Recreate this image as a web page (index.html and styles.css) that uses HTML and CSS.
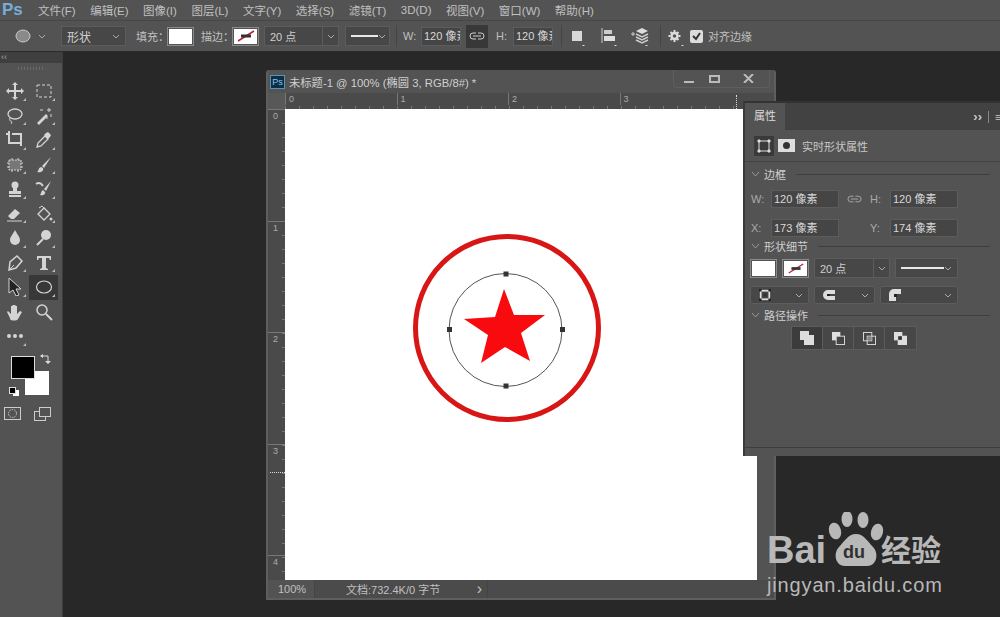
FILE: index.html
```html
<!DOCTYPE html>
<html lang="zh-CN">

<head>
    <meta charset="UTF-8">
    <title>Photoshop</title>
    <link rel="stylesheet" href="styles.css">
</head>

<body>
    <!-- menu -->
    <div class="menubar">
        <span class="ps-logo">Ps</span>
        <span>文件(F)</span>
        <span>编辑(E)</span>
        <span>图像(I)</span>
        <span>图层(L)</span>
        <span>文字(Y)</span>
        <span>选择(S)</span>
        <span>滤镜(T)</span>
        <span>3D(D)</span>
        <span>视图(V)</span>
        <span>窗口(W)</span>
        <span>帮助(H)</span>
    </div>

    <!-- options -->
    <div class="optionsbar">
        <svg class="opt-ellipse" width="16" height="14" viewBox="0 0 16 14"><ellipse cx="8" cy="7" rx="7" ry="6" fill="#8a8a8a" stroke="#c8c8c8"/></svg>
        <svg class="chev opt-chev" width="8" height="5" viewBox="0 0 8 5"><path d="M1 1l3 3 3-3" fill="none" stroke="#aaa"/></svg>
        <div class="select opt-shape"><span>形状</span><svg class="chev" width="8" height="5" viewBox="0 0 8 5"><path d="M1 1l3 3 3-3" fill="none" stroke="#aaa"/></svg></div>
        <span class="opt-label opt-fill">填充：</span>
        <div class="swatch opt-swatch"></div>
        <span class="opt-label opt-stroke">描边：</span>
        <div class="swatch swatch-stroke opt-swatch"><svg width="22" height="14" viewBox="0 0 22 14"><path d="M3 12L19 2" stroke="#c0222c" stroke-width="1.5"/><rect x="6" y="5.500" width="10" height="3" fill="#333"/></svg></div>
        <div class="select opt-size"><span>20 点</span><i class="select-split"></i><svg class="chev" width="8" height="5" viewBox="0 0 8 5"><path d="M1 1l3 3 3-3" fill="none" stroke="#aaa"/></svg></div>
        <div class="select opt-line"><i class="line-sample"></i><svg class="chev" width="8" height="5" viewBox="0 0 8 5"><path d="M1 1l3 3 3-3" fill="none" stroke="#aaa"/></svg></div>
        <i class="opt-sep"></i>
        <span class="opt-label opt-w">W:</span>
        <div class="field opt-field">120 像素</div>
        <div class="opt-link"><svg width="16" height="8" viewBox="0 0 16 8"><path d="M7 1H4a3 3 0 000 6h3M9 1h3a3 3 0 010 6H9M4 4h8" fill="none" stroke="#ccc"/></svg></div>
        <span class="opt-label opt-h">H:</span>
        <div class="field opt-field">120 像素</div>
        <i class="opt-sep opt-sep2"></i>
        <svg class="opt-icon-square" width="17" height="20" viewBox="0 0 17 20"><rect x="1" y="5" width="10" height="10" fill="#d8d8d8"/><path d="M11 19h3l-1.500 1.500z" fill="#ddd"/></svg>
        <svg class="opt-icon-align" width="17" height="20" viewBox="0 0 17 20"><path d="M1 2v15" stroke="#ccc"/><rect x="3" y="4" width="8" height="4" fill="#ccc"/><rect x="3" y="10" width="11" height="5" fill="#ddd"/><path d="M13 19h3l-1.500 1.500z" fill="#ddd"/></svg>
        <svg class="opt-icon-layers" width="20" height="20" viewBox="0 0 20 20"><path d="M1 8h4M3 6v4" stroke="#ccc"/><path d="M12 2l6 3-6 3-6-3z" fill="#ddd"/><path d="M6 8l6 3 6-3M6 11l6 3 6-3M6 14l6 3 6-3" fill="none" stroke="#ccc" stroke-width="1.500"/><path d="M15 19h3l-1.500 1.500z" fill="#ddd"/></svg>
        <i class="opt-sep opt-sep3"></i>
        <svg class="opt-icon-gear" width="18" height="20" viewBox="0 0 18 20"><circle cx="6.500" cy="10" r="3" fill="none" stroke="#ddd" stroke-width="2.500"/><path d="M6.500 4v2M6.500 14v2M.500 10h2M10.500 10h2M2.500 6l1.500 1.500M9 12.500l1.500 1.500M10.500 6L9 7.500M4 12.500L2.500 14" stroke="#ddd" stroke-width="2"/><path d="M13 19h3l-1.500 1.500z" fill="#ddd"/></svg>
        <div class="checkbox"><svg width="11" height="11" viewBox="0 0 11 11"><path d="M2 5l3 3 4-6" fill="none" stroke="#333" stroke-width="2"/></svg></div>
        <span class="opt-label opt-snap">对齐边缘</span>
    </div>

    <div class="workspace">
        <!-- tools -->
        <aside class="tools">
            <div class="tools-head">‹‹</div>
            <div class="grip"></div>
            <div class="tool-grid">
                <div class="tool more"><svg viewBox="0 0 18 18"><path d="M9 1v16M1 9h16" stroke="#d4d4d4" stroke-width="2"/><path d="M9 0l3 3H6zM9 18l3-3H6zM0 9l3-3v6zM18 9l-3-3v6z" fill="#d4d4d4"/></svg></div>
                <div class="tool more"><svg viewBox="0 0 18 18"><rect x="2" y="3" width="14" height="12" fill="none" stroke="#d4d4d4" stroke-dasharray="3 2"/></svg></div>
                <div class="tool more"><svg viewBox="0 0 18 18"><ellipse cx="9" cy="7" rx="7" ry="5" fill="none" stroke="#d4d4d4" stroke-width="1.300"/><path d="M4 11c-1 2 0 3 1 3s1 2 0 3" fill="none" stroke="#d4d4d4"/></svg></div>
                <div class="tool more"><svg viewBox="0 0 18 18"><path d="M2 16l9-9 2 2-9 9z" fill="#d4d4d4"/><path d="M14 1v4M12 3h4M16 7v3M5 3h3M12 10v2" stroke="#d4d4d4"/></svg></div>
                <div class="tool more"><svg viewBox="0 0 18 18"><path d="M0 3h3M3 0v12h12M6 3h9v12" fill="none" stroke="#d4d4d4" stroke-width="2"/></svg></div>
                <div class="tool more"><svg viewBox="0 0 18 18"><path d="M2 16l1-4 7-7 3 3-7 7z" fill="none" stroke="#d4d4d4" stroke-width="1.300"/><path d="M9 4l2-2 2-1 3 3-1 2-2 2z" fill="#d4d4d4"/></svg></div>
                <div class="tool more"><svg viewBox="0 0 18 18"><rect x="3" y="4" width="12" height="10" fill="#777" stroke="#d4d4d4" stroke-dasharray="2 1"/><path d="M1 7h2M1 11h2M15 7h2M15 11h2M6 2v2M12 2v2M6 14v2M12 14v2" stroke="#d4d4d4"/></svg></div>
                <div class="tool more"><svg viewBox="0 0 18 18"><path d="M16 1L7 10l2 2z" fill="#d4d4d4"/><path d="M6 11c-3 1-2 4-4 5 4 1 7-1 6-4z" fill="#d4d4d4"/></svg></div>
                <div class="tool more"><svg viewBox="0 0 18 18"><circle cx="9" cy="5" r="3.500" fill="#d4d4d4"/><path d="M7 8h4v3H7zM3 11h12v3H3zM3 15h12v2H3z" fill="#d4d4d4"/></svg></div>
                <div class="tool more"><svg viewBox="0 0 18 18"><path d="M16 1L9 9l2 2z" fill="#d4d4d4"/><path d="M8 10c-2 1-2 4-3 5 3 1 6-1 5-3z" fill="#d4d4d4"/><path d="M1 4c3-2 5-1 7 2" fill="none" stroke="#d4d4d4" stroke-width="2"/></svg></div>
                <div class="tool more"><svg viewBox="0 0 18 18"><path d="M2 11l7-7 5 4-6 6H5z" fill="#d4d4d4"/><path d="M1 16h15" stroke="#d4d4d4"/></svg></div>
                <div class="tool more"><svg viewBox="0 0 18 18"><path d="M9 3l6 6-6 6-6-6z" fill="none" stroke="#d4d4d4" stroke-width="1.300"/><path d="M4 3l3-2 3 3" fill="none" stroke="#d4d4d4"/><circle cx="16" cy="14" r="1.500" fill="#d4d4d4"/></svg></div>
                <div class="tool more"><svg viewBox="0 0 18 18"><path d="M9 1c2 4 5 7 5 10a5 5 0 01-10 0c0-3 3-6 5-10z" fill="#d4d4d4"/></svg></div>
                <div class="tool more"><svg viewBox="0 0 18 18"><circle cx="11" cy="6" r="5" fill="#d4d4d4"/><path d="M8 10l-6 6" stroke="#d4d4d4" stroke-width="2"/></svg></div>
                <div class="tool more"><svg viewBox="0 0 18 18"><path d="M3 16l1-8 7-6 5 5-6 7z" fill="none" stroke="#d4d4d4" stroke-width="1.500"/><path d="M3 16l5-5" stroke="#d4d4d4"/></svg></div>
                <div class="tool more"><svg viewBox="0 0 18 18"><path d="M2 2h14v4h-1l-1-2h-3v10l2 1v1H5v-1l2-1V4H4L3 6H2z" fill="#d4d4d4"/></svg></div>
                <div class="tool more"><svg viewBox="0 0 18 18"><path d="M3 0v15l4-3 3 6 3-1-3-6h5z" fill="#222" stroke="#d4d4d4"/></svg></div>
                <div class="tool more tool-active"><svg viewBox="0 0 18 18"><ellipse cx="9" cy="9" rx="7.500" ry="6" fill="none" stroke="#d4d4d4" stroke-width="1.200"/></svg></div>
                <div class="tool"><svg viewBox="0 0 18 18"><path d="M4 15L1 9l1-1 3 3V3h1.500v6-7H8v7-7h1.500v7-6H11v8l3-3 2 1-4 7c-1 2-7 2-8 0z" fill="#d4d4d4"/></svg></div>
                <div class="tool"><svg viewBox="0 0 18 18"><circle cx="7" cy="7" r="5" fill="none" stroke="#d4d4d4" stroke-width="1.500"/><path d="M11 11l6 6" stroke="#d4d4d4" stroke-width="2"/></svg></div>
                <div class="tool more"><svg viewBox="0 0 18 18"><circle cx="3" cy="9" r="2" fill="#d4d4d4"/><circle cx="9" cy="9" r="2" fill="#d4d4d4"/><circle cx="15" cy="9" r="2" fill="#d4d4d4"/></svg></div>
            </div>
            <div class="colors">
                <svg class="colors-swap" width="11" height="11" viewBox="0 0 11 11"><path d="M1 2h7v6" fill="none" stroke="#ddd"/><path d="M0 2l3-2v4zM8 10L5 7h6z" fill="#ddd"/></svg>
                <i class="color-bg"></i>
                <i class="color-fg"></i>
                <i class="colors-default-bg"></i>
                <i class="colors-default"></i>
            </div>
            <div class="tool-bottom">
                <svg width="17" height="13" viewBox="0 0 17 13"><rect x=".5" y=".5" width="16" height="12" fill="none" stroke="#ccc"/><circle cx="8.500" cy="6.500" r="4" fill="none" stroke="#ccc" stroke-dasharray="1.500 1"/></svg>
                <svg width="18" height="14" viewBox="0 0 18 14"><rect x=".5" y="4.500" width="11" height="9" fill="#535353" stroke="#ccc"/><rect x="5.500" y=".5" width="11" height="9" fill="#535353" stroke="#ccc"/></svg>
            </div>
        </aside>

        <!-- document window -->
        <section class="doc-window">
            <div class="doc-title">
                <span class="doc-icon">Ps</span>
                <span class="doc-name">未标题-1 @ 100% (椭圆 3, RGB/8#) *</span>
                <div class="win-buttons">
                    <i class="win-min"></i>
                    <i class="win-max"></i>
                    <svg class="win-close" width="11" height="9" viewBox="0 0 11 9"><path d="M1 0l9 9M10 0L1 9" stroke="#bbb" stroke-width="2"/></svg>
                </div>
            </div>
            <div class="ruler-h">
                <div class="ruler-corner"></div>
                <div class="ruler-h-scale"><span>0</span><span>1</span><span>2</span><span>3</span></div>
                <i class="ruler-mark-h"></i>
            </div>
            <div class="doc-main">
                <div class="ruler-v"><span>0</span><span>1</span><span>2</span><span>3</span><span>4</span><i class="ruler-mark-v"></i></div>
                <div class="canvas">
                    <svg class="art" width="472" height="471" viewBox="285 109 472 471">
                        <circle cx="507" cy="328" r="91.500" fill="none" stroke="#d81616" stroke-width="5"/>
                        <circle cx="505.500" cy="330" r="56.500" fill="none" stroke="#555" stroke-width="1"/>
                        <polygon points="504,289 514,315 545,315 521,333 530,361 505,347 481,363 488,335 464,319 495,317" fill="#f80a0e"/>
                        <rect x="503.500" y="271.500" width="5" height="5" fill="#333"/>
                        <rect x="503.500" y="383.500" width="5" height="5" fill="#333"/>
                        <rect x="447" y="327" width="5" height="5" fill="#333"/>
                        <rect x="560" y="327" width="5" height="5" fill="#333"/>
                    </svg>
                </div>
                <div class="doc-scroll"></div>
            </div>
            <div class="doc-status">
                <span class="status-zoom">100%</span>
                <div class="status-mid">
                    <span>文档:732.4K/0 字节</span>
                    <span class="status-arrow">›</span>
                </div>
            </div>
        </section>

        <!-- properties panel -->
        <section class="props">
            <div class="props-tabs">
                <span class="props-tab">属性</span>
                <span class="props-collapse">››</span>
                <i class="props-tabsep"></i>
                <span class="props-menu">≡</span>
            </div>
            <div class="props-kind">
                <span class="kind-btn"><svg width="14" height="14" viewBox="0 0 14 14"><rect x="2" y="2" width="10" height="10" fill="none" stroke="#ddd"/><path d="M1 1h2v2H1zM11 1h2v2h-2zM1 11h2v2H1zM11 11h2v2h-2z" fill="#ddd" stroke="#ddd"/></svg></span>
                <span class="kind-mask"><i></i></span>
                <span class="kind-label">实时形状属性</span>
            </div>
            <div class="section-head">
                <svg width="9" height="6" viewBox="0 0 9 6"><path d="M1 1l3.500 4L8 1" fill="none" stroke="#999"/></svg>
                <span>边框</span><i></i>
            </div>
            <div class="dim-row">
                <span class="dim-label">W:</span><div class="field dim-field">120 像素</div>
                <svg class="dim-link" width="15" height="8" viewBox="0 0 16 8"><path d="M7 1H4a3 3 0 000 6h3M9 1h3a3 3 0 010 6H9M4 4h8" fill="none" stroke="#aaa"/></svg>
                <span class="dim-label dim-label-h">H:</span><div class="field dim-field">120 像素</div>
            </div>
            <div class="dim-row dim-row-xy">
                <span class="dim-label">X:</span><div class="field dim-field">173 像素</div>
                <i class="dim-link-gap"></i>
                <span class="dim-label dim-label-h">Y:</span><div class="field dim-field">174 像素</div>
            </div>
            <div class="section-head section-tight">
                <svg width="9" height="6" viewBox="0 0 9 6"><path d="M1 1l3.500 4L8 1" fill="none" stroke="#999"/></svg>
                <span>形状细节</span><i></i>
            </div>
            <div class="shape-row">
                <div class="swatch prop-swatch"></div>
                <div class="swatch swatch-stroke prop-swatch"><svg width="20" height="13" viewBox="0 0 22 14"><path d="M3 12L19 2" stroke="#c0222c" stroke-width="1.500"/><rect x="6" y="5.500" width="10" height="3" fill="#333"/></svg></div>
                <div class="select prop-size"><span>20 点</span><i class="select-split"></i><svg class="chev" width="8" height="5" viewBox="0 0 8 5"><path d="M1 1l3 3 3-3" fill="none" stroke="#aaa"/></svg></div>
                <div class="select prop-line"><i class="line-sample"></i><svg class="chev" width="8" height="5" viewBox="0 0 8 5"><path d="M1 1l3 3 3-3" fill="none" stroke="#aaa"/></svg></div>
            </div>
            <div class="shape-row shape-row2">
                <div class="select prop-drop prop-drop1"><svg width="12" height="12" viewBox="0 0 14 14"><rect x="2" y="2" width="10" height="10" fill="none" stroke="#e0e0e0" stroke-width="2"/><rect x="5" y="5" width="4" height="4" fill="#333"/><path d="M0 0h3v3H0zM11 0h3v3h-3zM0 11h3v3H0zM11 11h3v3h-3z" fill="#222"/></svg><svg class="chev" width="8" height="5" viewBox="0 0 8 5"><path d="M1 1l3 3 3-3" fill="none" stroke="#aaa"/></svg></div>
                <div class="select prop-drop prop-drop2"><svg width="12" height="10" viewBox="0 0 12 10"><path d="M12 0H5a5 5 0 000 10h7V6H5V4h7z" fill="#ddd"/><rect x="4" y="4" width="3" height="2" fill="#222"/></svg><svg class="chev" width="8" height="5" viewBox="0 0 8 5"><path d="M1 1l3 3 3-3" fill="none" stroke="#aaa"/></svg></div>
                <div class="select prop-drop prop-drop3"><svg width="12" height="12" viewBox="0 0 12 12"><path d="M0 12V5a5 5 0 015-5h7v5H7v7H0z" fill="#ddd"/><rect x="5" y="5" width="3" height="3" fill="#222"/></svg><svg class="chev" width="8" height="5" viewBox="0 0 8 5"><path d="M1 1l3 3 3-3" fill="none" stroke="#aaa"/></svg></div>
            </div>
            <div class="section-head section-path">
                <svg width="9" height="6" viewBox="0 0 9 6"><path d="M1 1l3.500 4L8 1" fill="none" stroke="#999"/></svg>
                <span>路径操作</span><i></i>
            </div>
            <div class="path-ops">
                <span class="path-op path-op-on"><svg width="14" height="14" viewBox="0 0 14 14"><path d="M0 0h9v4h5v10H4V9H0z" fill="#ddd"/></svg></span>
                <span class="path-op"><svg width="13" height="13" viewBox="0 0 14 14"><rect x="0" y="0" width="9" height="9" fill="#ddd"/><rect x="4.500" y="4.500" width="9" height="9" fill="#444" stroke="#ddd"/></svg></span>
                <span class="path-op"><svg width="13" height="13" viewBox="0 0 14 14"><rect x=".5" y=".5" width="9" height="9" fill="none" stroke="#ddd"/><rect x="4.500" y="4.500" width="9" height="9" fill="none" stroke="#ddd"/><rect x="5" y="5" width="4" height="4" fill="#888"/></svg></span>
                <span class="path-op"><svg width="13" height="13" viewBox="0 0 14 14"><rect x="0" y="0" width="9" height="9" fill="#ddd"/><rect x="4" y="4" width="10" height="10" fill="#ddd"/><rect x="4.500" y="4.500" width="4" height="4" fill="#333"/></svg></span>
            </div>
            <div class="props-foot"></div>
        </section>

        <!-- watermark -->
        <div class="watermark">
            <svg class="paw" width="60" height="62" viewBox="0 0 60 62">
                <ellipse cx="9" cy="19" rx="6" ry="8.500" fill="#b8b8b8" transform="rotate(-15 9 19)"/>
                <ellipse cx="21" cy="7" rx="5.500" ry="8" fill="#b8b8b8"/>
                <ellipse cx="37" cy="8" rx="5.500" ry="8" fill="#b8b8b8"/>
                <ellipse cx="51" cy="20" rx="6" ry="8.500" fill="#b8b8b8" transform="rotate(15 51 20)"/>
                <path d="M30 22c8 0 12 8 17 13 6 6 4 19-6 19H19C9 54 7 41 13 35c5-5 9-13 17-13z" fill="#b8b8b8"/>
            </svg>
            <span class="paw-du">du</span>
            <span class="wm-bai">Bai</span>
            <span class="wm-jy">经验</span>
            <span class="wm-url">jingyan.baidu.com</span>
        </div>
    </div>
</body>

</html>
```

FILE: styles.css
```css
* {
    box-sizing: border-box;
}

html,
body {
    margin: 0;
    height: 100%;
}

body {
    width: 1000px;
    height: 617px;
    overflow: hidden;
    display: flex;
    flex-direction: column;
    background-color: #282828;
    color: #c8c8c8;
    font-family: "Liberation Sans", "Noto Sans CJK SC", sans-serif;
    font-size: 11px;
}

i {
    display: block;
}

/* menu */
.menubar {
    height: 20px;
    display: flex;
    align-items: center;
    padding-left: 2px;
    background-color: #535353;
    color: #c0c0c0;
    font-size: 11.500px;
}

.menubar span {
    margin-right: 14.500px;
    white-space: nowrap;
}

.menubar .ps-logo {
    width: 21px;
    margin-right: 15px;
    color: #78aed6;
    font-size: 17px;
    font-weight: bold;
}

/* options bar */
.optionsbar {
    height: 32px;
    display: flex;
    align-items: center;
    background-color: #535353;
    border-top: 1px solid #464646;
    border-bottom: 1px solid #2b2b2b;
    padding-left: 15px;
    color: #c0c0c0;
}

.chev {
    flex: none;
}

.opt-chev {
    margin-left: 7px;
}

.select {
    height: 20px;
    display: flex;
    align-items: center;
    justify-content: space-between;
    padding: 0 5px;
    background-color: #474747;
    border: 1px solid #5c5c5c;
    color: #d0d0d0;
}

.select-split {
    width: 1px;
    height: 18px;
    background-color: #5c5c5c;
    margin-left: auto;
    margin-right: 4px;
}

.opt-shape {
    width: 65px;
    margin-left: 15px;
    font-size: 12px;
}

.opt-label {
    white-space: nowrap;
}

.opt-fill {
    margin-left: 10px;
    width: 31px;
}

.opt-stroke {
    margin-left: 7px;
    width: 31px;
}

.swatch {
    background-color: #fff;
    border: 2px solid #535353;
    outline: 1px solid #8a8a8a;
    outline-offset: -1px;
}

.swatch-stroke {
    display: flex;
    align-items: center;
    justify-content: center;
}

.opt-swatch {
    width: 27px;
    height: 19px;
}

.opt-size {
    width: 75px;
    margin-left: 5px;
    padding-right: 3px;
}

.opt-line {
    width: 45px;
    margin-left: 6px;
    padding-right: 3px;
}

.line-sample {
    width: 28px;
    height: 2px;
    background-color: #e8e8e8;
}

.opt-sep {
    width: 1px;
    height: 22px;
    background-color: #444;
    margin-left: 6px;
}

.opt-w {
    margin-left: 6px;
    width: 18px;
}

.opt-h {
    margin-left: 8px;
    width: 17px;
}

.field {
    background-color: #454545;
    border: 1px solid #5c5c5c;
    color: #d8d8d8;
    white-space: nowrap;
    overflow: hidden;
    padding-left: 2px;
}

.opt-field {
    width: 40px;
    height: 19px;
    line-height: 17px;
}

.opt-link {
    width: 22px;
    height: 23px;
    margin-left: 5px;
    display: flex;
    align-items: center;
    justify-content: center;
    background-color: #383838;
}

.opt-sep2 {
    margin-left: 8px;
}

.opt-icon-square {
    margin-left: 9px;
}

.opt-icon-align {
    margin-left: 13px;
}

.opt-icon-layers {
    margin-left: 12px;
}

.opt-sep3 {
    margin-left: 10px;
}

.opt-icon-gear {
    margin-left: 7px;
}

.checkbox {
    width: 13px;
    height: 13px;
    margin-left: 4px;
    background-color: #dcdcdc;
    border-radius: 2px;
    display: flex;
    align-items: center;
    justify-content: center;
}

.opt-snap {
    margin-left: 5px;
}

/* workspace */
.workspace {
    position: relative;
    flex: 1;
}

.tools {
    width: 63px;
    height: 100%;
    background-color: #535353;
    border-right: 1px solid #3c3c3c;
}

.tools-head {
    height: 11px;
    line-height: 10px;
    padding-left: 1px;
    background-color: #3f3f3f;
    color: #aaa;
    font-size: 9px;
}

.grip {
    height: 3px;
    margin: 4px 18px 0;
    background-image: repeating-linear-gradient(90deg, #6a6a6a 0 1px, transparent 1px 3px);
}

.tool-grid {
    display: grid;
    grid-template-columns: 29px 29px;
    grid-auto-rows: 24.500px;
    margin-top: 9px;
}

.tool {
    position: relative;
    display: flex;
    align-items: center;
    justify-content: center;
}

.tool svg {
    width: 18px;
    height: 18px;
}

.tool.more::after {
    content: "";
    position: absolute;
    right: 3px;
    bottom: 3px;
    border-style: solid;
    border-width: 0 0 3px 3px;
    border-color: transparent transparent #bbb transparent;
}

.tool-active {
    background-color: #383838;
}

.colors {
    position: relative;
    height: 46px;
    margin-top: 4px;
}

.color-fg {
    position: absolute;
    left: 11px;
    top: 3px;
    width: 24px;
    height: 23px;
    background-color: #000;
    border: 1px solid #ddd;
}

.color-bg {
    position: absolute;
    left: 25px;
    top: 18px;
    width: 24px;
    height: 24px;
    background-color: #fff;
}

.colors-swap {
    position: absolute;
    left: 40px;
    top: 1px;
}

.colors-default {
    position: absolute;
    left: 9px;
    top: 34px;
    width: 7px;
    height: 7px;
    background-color: #000;
    border: 1px solid #ddd;
}

.colors-default-bg {
    position: absolute;
    left: 13px;
    top: 37px;
    width: 6px;
    height: 6px;
    background-color: #fff;
}

.tool-bottom {
    display: flex;
    justify-content: space-between;
    padding: 0 10px 0 4px;
    margin-top: 8px;
}

/* document window */
.doc-window {
    position: absolute;
    left: 266px;
    top: 18px;
    width: 510px;
    height: 530px;
    display: flex;
    flex-direction: column;
    background-color: #535353;
    border: 2px solid #5e5e5e;
    border-top-width: 0;
    border-radius: 3px 3px 0 0;
}

.doc-title {
    position: relative;
    height: 23px;
    display: flex;
    align-items: center;
    padding-left: 2px;
    font-size: 11.300px;
}

.doc-icon {
    width: 15px;
    height: 14px;
    line-height: 12px;
    background-color: #0c2f48;
    border: 1px solid #5a93b8;
    color: #8ec5ea;
    font-size: 9px;
    text-align: center;
}

.doc-name {
    margin-left: 4px;
    color: #cfcfcf;
}

.win-buttons {
    position: absolute;
    right: 4px;
    top: 0;
    width: 97px;
    height: 18px;
    display: flex;
    align-items: center;
    border: 1px solid #5e5e5e;
    border-top: 0;
    border-radius: 0 0 4px 4px;
}

.win-min {
    width: 10px;
    height: 2px;
    margin: 6px 0 0 10px;
    background-color: #bbb;
}

.win-max {
    width: 11px;
    height: 8px;
    margin-left: 15px;
    border: 2px solid #bbb;
}

.win-close {
    margin-left: 23px;
}

.ruler-h {
    position: relative;
    height: 16px;
    display: flex;
    background-color: #4a4a4a;
}

.ruler-corner {
    width: 17px;
    background-color: #585858;
}

.ruler-h-scale {
    flex: 1;
    display: flex;
    background-image: repeating-linear-gradient(90deg, #777 0 1px, transparent 1px 14px);
    background-size: 100% 3px;
    background-position: bottom;
    background-repeat: no-repeat;
}

.ruler-h-scale span {
    width: 111.500px;
    height: 12px;
    padding-left: 3px;
    line-height: 12px;
    font-size: 9px;
    color: #aaa;
    border-left: 1px solid #777;
}

.ruler-mark-h {
    position: absolute;
    left: 468px;
    top: 2px;
    height: 14px;
    border-left: 1px dotted #ddd;
}

.doc-main {
    flex: 1;
    display: flex;
    min-height: 0;
}

.ruler-v {
    position: relative;
    width: 17px;
    flex: none;
    overflow: hidden;
    display: flex;
    flex-direction: column;
    background-color: #4a4a4a;
    background-image: repeating-linear-gradient(180deg, #777 0 1px, transparent 1px 14px);
    background-size: 3px 100%;
    background-position: right;
    background-repeat: no-repeat;
}

.ruler-v span {
    flex: none;
    height: 111.500px;
    padding: 1px 0 0 5px;
    font-size: 9px;
    color: #aaa;
    border-top: 1px solid #777;
}

.ruler-mark-v {
    position: absolute;
    left: 2px;
    right: 0;
    top: 363px;
    border-top: 1px dotted #ddd;
}

.canvas {
    width: 472px;
    flex: none;
    background-color: #fff;
}

.art {
    display: block;
}

.doc-scroll {
    flex: 1;
    background-color: #535353;
}

.doc-status {
    height: 18px;
    display: flex;
    align-items: center;
    background-color: #4b4b4b;
    color: #c0c0c0;
    font-size: 11px;
}

.status-zoom {
    width: 47px;
    height: 100%;
    line-height: 18px;
    padding-left: 10px;
    background-color: #535353;
    border-right: 1px solid #444;
}

.status-mid {
    width: 173px;
    height: 100%;
    display: flex;
    align-items: center;
    justify-content: space-between;
    padding: 0 5px 0 31px;
    border-right: 1px solid #444;
}

.status-arrow {
    font-size: 16px;
}

/* properties panel */
.props {
    position: absolute;
    left: 743px;
    top: 49px;
    width: 257px;
    height: 355px;
    display: flex;
    flex-direction: column;
    background-color: #535353;
    border-left: 2px solid #3a3a3a;
    border-top: 2px solid #333;
    color: #c8c8c8;
}

.props-tabs {
    height: 27px;
    flex: none;
    display: flex;
    align-items: center;
    background-color: #424242;
    position: relative;
}

.props-tab {
    width: 40px;
    height: 100%;
    line-height: 27px;
    padding-left: 9px;
    background-color: #535353;
    color: #ddd;
}

.props-collapse {
    margin-left: auto;
    font-size: 13px;
    font-weight: bold;
}

.props-tabsep {
    width: 1px;
    height: 12px;
    background-color: #888;
    margin: 0 6px;
}

.props-menu {
    width: 5px;
    overflow: hidden;
}

.props-kind {
    height: 32px;
    flex: none;
    display: flex;
    align-items: center;
    padding-left: 9px;
    border-bottom: 1px solid #444;
}

.kind-btn {
    width: 20px;
    height: 20px;
    display: flex;
    align-items: center;
    justify-content: center;
    background-color: #3a3a3a;
}

.kind-mask {
    width: 17px;
    height: 13px;
    margin-left: 4px;
    display: flex;
    align-items: center;
    justify-content: center;
    background-color: #ddd;
}

.kind-mask i {
    width: 7px;
    height: 7px;
    border-radius: 50%;
    background-color: #333;
}

.kind-label {
    margin-left: 7px;
}

.section-head {
    height: 20px;
    display: flex;
    align-items: center;
    padding: 0 10px 0 6px;
    margin-top: 2px;
}

.section-head span {
    margin: 0 10px 0 4px;
    color: #d0d0d0;
}

.section-head i {
    flex: 1;
    height: 1px;
    background-color: #3f3f3f;
}

.section-tight {
    margin-top: 1px;
    height: 16px;
}

.section-path {
    margin-top: 2px;
    height: 18px;
}

.dim-row {
    height: 19px;
    display: flex;
    align-items: center;
    padding-left: 6px;
    margin-top: 5px;
}

.dim-row-xy {
    margin-top: 10px;
}

.dim-label {
    width: 20px;
    color: #aaa;
}

.dim-field {
    width: 68px;
    height: 18px;
    line-height: 16px;
}

.dim-link {
    margin-left: 8px;
    width: 15px;
}

.dim-link-gap {
    margin-left: 8px;
    width: 15px;
}

.dim-label-h {
    margin-left: 8px;
    width: 20px;
}

.shape-row {
    display: flex;
    align-items: center;
    gap: 5px;
    padding-left: 5px;
    margin-top: 4px;
}

.shape-row2 {
    margin-top: 8px;
}

.prop-swatch {
    width: 27px;
    height: 19px;
}

.prop-swatch svg {
    display: block;
}

.prop-size {
    width: 76px;
    padding-right: 3px;
}

.prop-line {
    width: 63px;
}

.prop-line .line-sample {
    width: 44px;
}

.prop-drop {
    height: 18px;
    padding-left: 8px;
    border-radius: 2px;
}

.prop-drop1 {
    width: 59px;
}

.prop-drop2 {
    width: 61px;
}

.prop-drop3 {
    width: 78px;
}

.path-ops {
    display: flex;
    align-self: flex-start;
    margin: 2px 0 0 46px;
    border: 1px solid #5c5c5c;
}

.path-op {
    width: 31px;
    height: 22px;
    display: flex;
    align-items: center;
    justify-content: center;
    background-color: #474747;
    border-right: 1px solid #5c5c5c;
}

.path-op:last-child {
    border-right: 0;
}

.path-op-on {
    background-color: #3c3c3c;
}

.props-foot {
    margin-top: auto;
    height: 9px;
    border-top: 1px solid #3d3d3d;
}

/* watermark */
.watermark {
    position: absolute;
    left: 767px;
    top: 459px;
    width: 180px;
    height: 85px;
    color: #b8b8b8;
}

.paw {
    position: absolute;
    left: 59px;
    top: 1px;
}

.paw-du {
    position: absolute;
    left: 76px;
    top: 31px;
    color: #303030;
    font-size: 18px;
    font-weight: bold;
}

.wm-bai {
    position: absolute;
    left: 0;
    top: 18px;
    font-size: 38px;
    font-weight: bold;
}

.wm-jy {
    position: absolute;
    left: 114px;
    top: 18px;
    font-size: 30px;
    line-height: 38px;
    font-weight: bold;
    font-family: "Noto Sans CJK SC", sans-serif;
    white-space: nowrap;
}

.wm-url {
    position: absolute;
    left: 0;
    top: 62px;
    font-size: 20px;
    line-height: 24px;
    letter-spacing: .85px;
    white-space: nowrap;
}
```
